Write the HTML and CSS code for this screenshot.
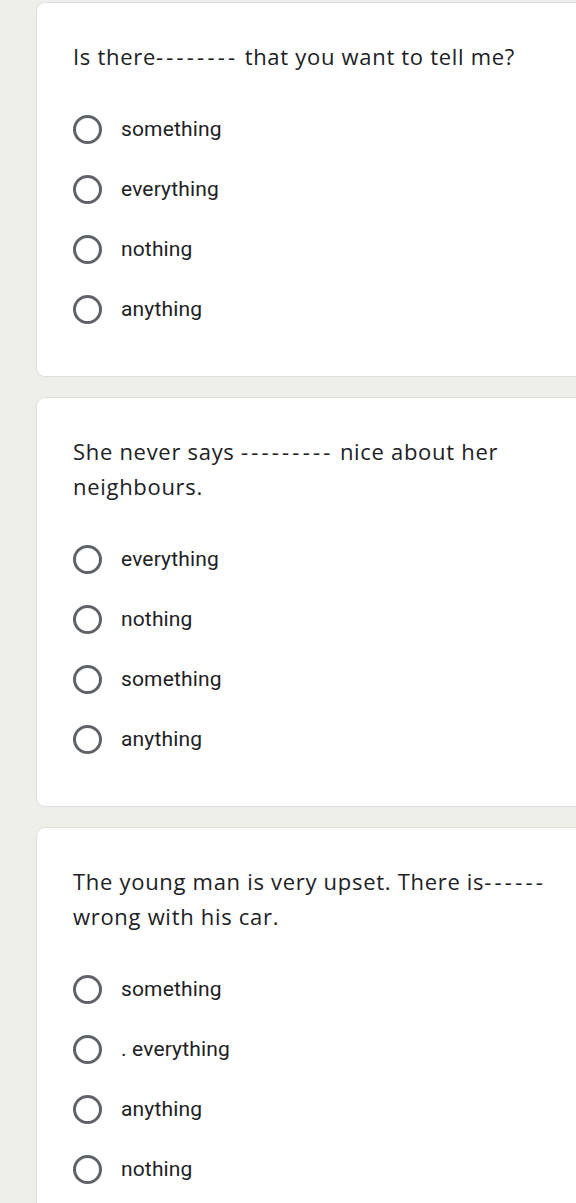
FILE: index.html
```html
<!DOCTYPE html>
<html>
<head>
<meta charset="utf-8">
<link rel="stylesheet" href="styles.css">
</head>
<body>
<div class="page">
  <div class="card">
    <div class="question">Is there<span class="blank">--------</span> that you want to tell me?</div>
    <div class="options">
      <div class="opt"><span class="radio"></span><span class="label">something</span></div>
      <div class="opt"><span class="radio"></span><span class="label">everything</span></div>
      <div class="opt"><span class="radio"></span><span class="label">nothing</span></div>
      <div class="opt"><span class="radio"></span><span class="label">anything</span></div>
    </div>
  </div>
  <div class="card">
    <div class="question">She never says <span class="blank">---------</span> nice about her neighbours.</div>
    <div class="options">
      <div class="opt"><span class="radio"></span><span class="label">everything</span></div>
      <div class="opt"><span class="radio"></span><span class="label">nothing</span></div>
      <div class="opt"><span class="radio"></span><span class="label">something</span></div>
      <div class="opt"><span class="radio"></span><span class="label">anything</span></div>
    </div>
  </div>
  <div class="card">
    <div class="question">The young man is very upset. There is<span class="blank">------</span> wrong with his car.</div>
    <div class="options">
      <div class="opt"><span class="radio"></span><span class="label">something</span></div>
      <div class="opt"><span class="radio"></span><span class="label">. everything</span></div>
      <div class="opt"><span class="radio"></span><span class="label">anything</span></div>
      <div class="opt"><span class="radio"></span><span class="label">nothing</span></div>
    </div>
  </div>
</div>
</body>
</html>
```
FILE: styles.css
```css
html, body {
  margin: 0;
  padding: 0;
  background: #eeeeea;
}
body {
  font-family: Roboto, "Liberation Sans", sans-serif;
  color: #202124;
  overflow: hidden;
}
.page {
  padding: 2px 0 0 36px;
  display: flex;
  flex-direction: column;
  gap: 20px;
}
.card {
  background: #ffffff;
  border: 1px solid #dedfdc;
  border-right: none;
  border-radius: 9px 0 0 9px;
  padding: 36px 40px 37px 36px;
  margin-right: -10px;
}
.question {
  font-family: "Open Sans", Roboto, sans-serif;
  font-size: 22px;
  letter-spacing: 0.7px;
  line-height: 35px;
  max-width: 480px;
  margin-bottom: 25px;
}
.blank {
  letter-spacing: 3.2px;
}
.options {
  display: flex;
  flex-direction: column;
}
.opt {
  height: 60px;
  display: flex;
  align-items: center;
}
.radio {
  width: 29px;
  height: 29px;
  box-sizing: border-box;
  border: 3px solid #5f6368;
  border-radius: 50%;
  flex: none;
}
.label {
  margin-left: 19px;
  font-size: 21px;
  letter-spacing: 0.15px;
}
```
